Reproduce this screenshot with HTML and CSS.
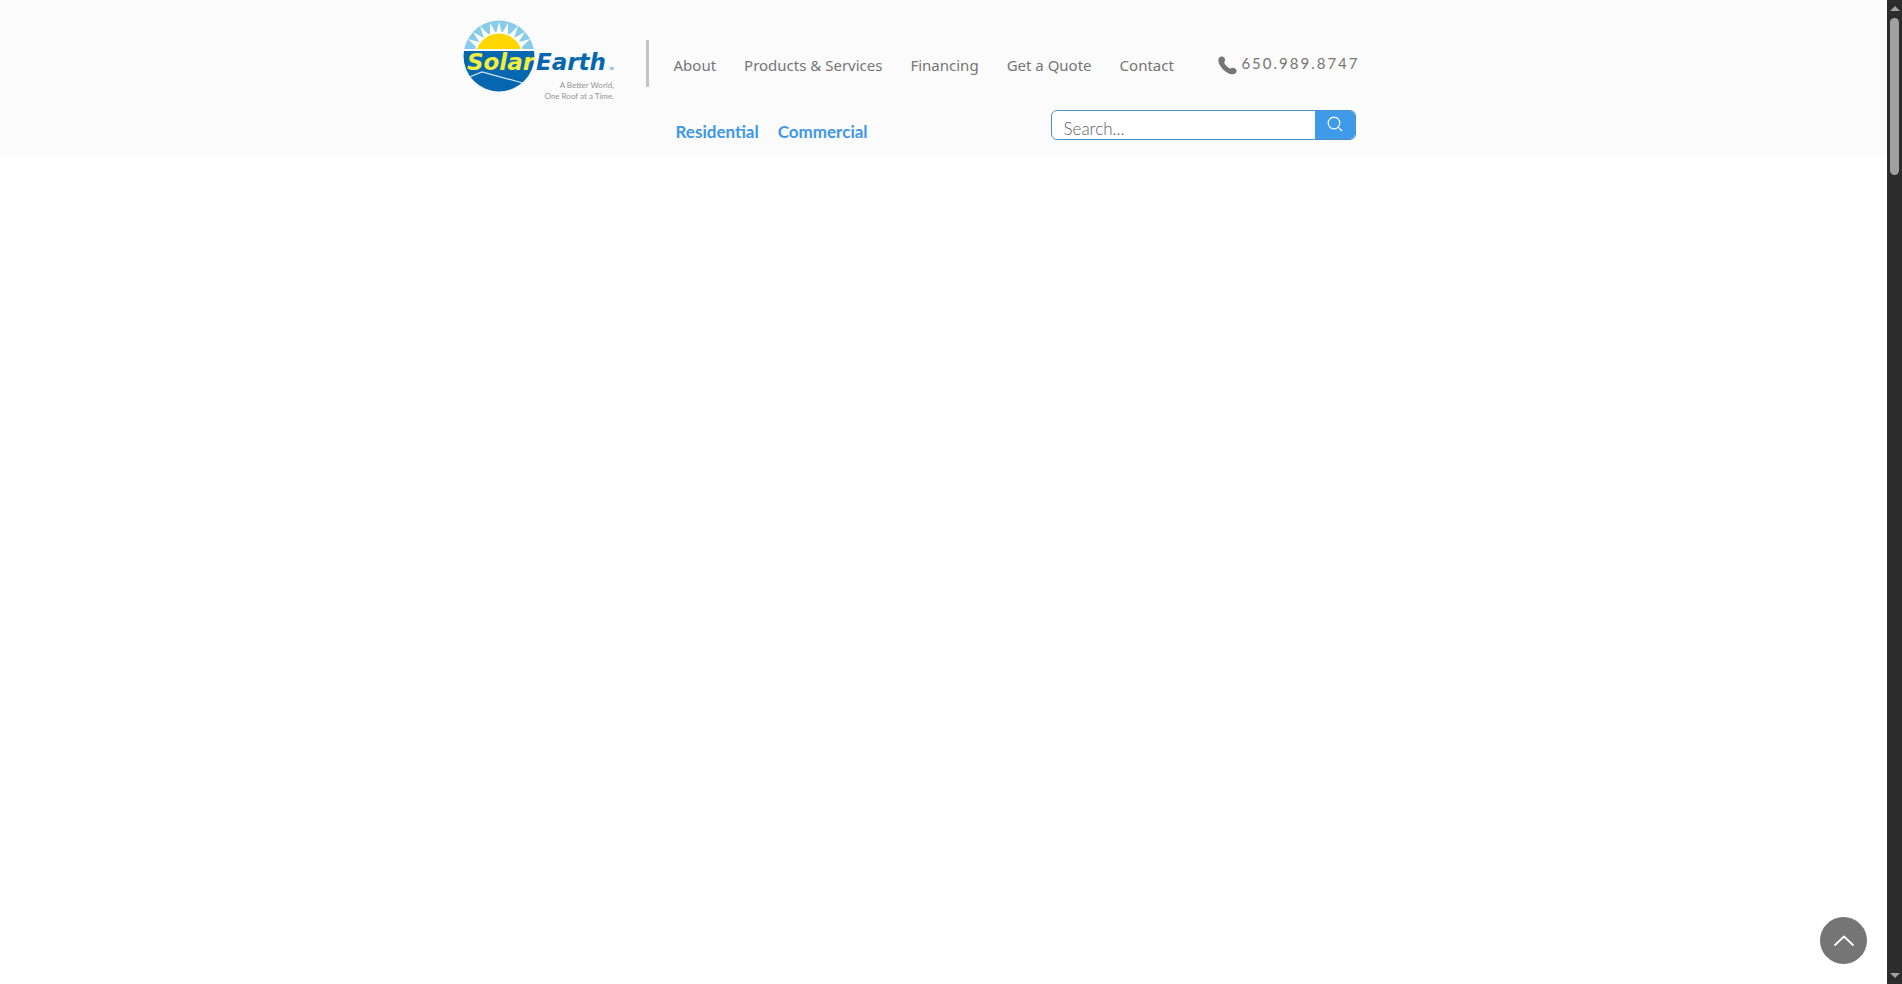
FILE: index.html
```html
<!DOCTYPE html>
<html lang="en">
<head>
<meta charset="utf-8">
<title>SolarEarth</title>
<link rel="stylesheet" href="styles.css">
</head>
<body>
<div class="page">
  <header class="header">
    <div class="header-inner">
      <a class="logo" href="#" aria-label="SolarEarth home">
        <svg class="logo-art" viewBox="0 0 154 84" width="154" height="84">
          <defs><clipPath id="disc"><circle cx="36" cy="36" r="35.5"/></clipPath></defs>
          <g clip-path="url(#disc)">
            <rect width="72" height="30" fill="#87cdea"/>
            <path fill="#fff" d="M5 19L16.700 22.300L13.700 27.500ZM10 12L20.800 18.100L16.600 22.500ZM17 6L26 15L21 18.200ZM27 3L32.800 13L27 14.600ZM36 2L38.800 13L33.200 13ZM45 3L39.200 13L45 14.600ZM55 6L46 15L51 18.200ZM62 12L51.200 18.100L55.400 22.500ZM67 19L55.300 22.300L58.300 27.500Z"/>
            <circle cx="36" cy="37" r="25" fill="#fff"/>
            <circle cx="36" cy="37" r="23.500" fill="#ffd600"/>
            <rect y="29" width="72" height="2" fill="#fff"/>
            <rect y="31" width="72" height="42" fill="#0467b0"/>
            <path d="M4 58L19 52L60 63" fill="none" stroke="#d5e7f3" stroke-width="1.200"/>
          </g>
          <text class="logo-solar" x="4" y="50">Solar</text>
          <text class="logo-earth" x="73" y="50">Earth</text>
          <text class="logo-tm" x="146" y="50">TM</text>
          <text class="logo-tag" x="151" y="68" text-anchor="end">A Better World,</text>
          <text class="logo-tag" x="151" y="79" text-anchor="end">One Roof at a Time.</text>
        </svg>
      </a>
      <div class="divider"></div>
      <div class="header-main">
        <div class="top-row">
          <nav class="nav" aria-label="Main">
            <a href="#">About</a>
            <a href="#">Products &amp; Services</a>
            <a href="#">Financing</a>
            <a href="#">Get a Quote</a>
            <a href="#">Contact</a>
          </nav>
          <a class="phone" href="tel:6509898747">
            <svg class="phone-icon" viewBox="0 0 19 19" width="19" height="19"><path fill="#757575" d="M1.200 1.500C3-.2 5.600.2 6.600 2.200C7.500 4 7.200 5.200 6.100 6.300C6.900 8.900 9.500 11.600 12.300 12.700C13.800 11.500 15.400 11.600 17 12.600C19 13.900 19.200 15.700 17.600 17.300C15.700 18.900 12.700 18.600 9.400 16.800C5.800 14.700 2.800 11.600 1.200 8C.1 5.300 0 3 1.200 1.500Z"/></svg>
            <span>650.989.8747</span>
          </a>
        </div>
        <div class="bottom-row">
          <nav class="segments" aria-label="Segments">
            <a href="#">Residential</a>
            <a href="#">Commercial</a>
          </nav>
          <form class="search" role="search">
            <input class="search-input" type="search" placeholder="Search..." aria-label="Search">
            <button class="search-button" type="button" aria-label="Search">
              <svg viewBox="0 0 16 16" width="16" height="16" fill="none" stroke="#fff" stroke-width="1.200"><circle cx="7" cy="7" r="5.800"/><path d="M11.200 11.200L15 15"/></svg>
            </button>
          </form>
        </div>
      </div>
    </div>
  </header>
  <main class="content"></main>
  <button class="to-top" type="button" aria-label="Back to top">
    <svg viewBox="0 0 22 12" width="22" height="12" fill="none" stroke="#fff" stroke-width="1.800"><path d="M1.500 10.500L11 1.500L20.500 10.500"/></svg>
  </button>
</div>
<div class="scrollbar" aria-hidden="true">
  <span class="arrow arrow-up"></span>
  <span class="thumb"></span>
  <span class="arrow arrow-down"></span>
</div>
</body>
</html>
```

FILE: styles.css
```css
* { box-sizing: border-box; }
body {
  margin: 0;
  min-height: 100vh;
  display: flex;
  background: #fff;
  font-family: "Noto Sans", sans-serif;
  color: #757575;
}
a { color: inherit; text-decoration: none; }
.page { flex: 1; min-width: 0; }
.header { background: #fbfbfb; }
.header-inner {
  max-width: 980px;
  margin: 0 auto;
  padding: 20px 78px 13px 9px;
  display: flex;
  align-items: flex-start;
}
.logo { flex: none; }
.logo-art { display: block; }
.logo-solar, .logo-earth {
  font-family: "DejaVu Sans", sans-serif;
  font-weight: bold;
  font-style: italic;
  font-size: 23px;
}
.logo-solar { fill: #f3ee3c; }
.logo-earth { fill: #0467b0; }
.logo-tm { font-size: 3px; fill: #0467b0; }
.logo-tag {
  font-family: Lato, sans-serif;
  font-size: 8px;
  fill: #959595;
}
.divider {
  flex: none;
  width: 3px;
  height: 47px;
  margin: 20px 25px 0 29px;
  background: #c4c4c4;
}
.header-main { flex: 1; min-width: 0; }
.top-row, .bottom-row {
  display: flex;
  justify-content: space-between;
}
.top-row { padding-top: 32px; height: 90px; }
.nav {
  display: flex;
  gap: 28px;
  font-size: 15px;
  line-height: 26px;
  white-space: nowrap;
}
.phone {
  display: flex;
  gap: 4px;
  margin-right: -4px;
  font-family: Lato, sans-serif;
  font-size: 15px;
  line-height: 22px;
  letter-spacing: 2px;
}
.phone-icon { margin-top: 4px; }
.segments {
  display: flex;
  gap: 19px;
  padding: 11px 0 0 2px;
  font-family: Lato, sans-serif;
  font-size: 17px;
  font-weight: bold;
  line-height: 21px;
  color: #4097e5;
}
.search {
  display: flex;
  width: 305px;
  height: 30px;
  border: 1px solid #4a90c9;
  border-radius: 6px;
  overflow: hidden;
  background: #fff;
}
.search-input {
  flex: 1;
  min-width: 0;
  border: 0;
  padding: 8px 12px 0;
  background: transparent;
  font-family: Lato, sans-serif;
  font-weight: 300;
  font-size: 17px;
  line-height: 20px;
  outline: 0;
}
.search-input::placeholder { color: #606060; }
.search-button {
  width: 40px;
  border: 0;
  padding: 0 0 2px;
  display: grid;
  place-items: center;
  background: #3f9bea;
}
.to-top {
  position: fixed;
  right: 35px;
  bottom: 20px;
  width: 47px;
  height: 47px;
  border: 0;
  border-radius: 50%;
  padding: 0;
  display: grid;
  place-items: center;
  background: #757575;
}
.scrollbar {
  width: 15px;
  flex: none;
  padding: 6px 0;
  display: flex;
  flex-direction: column;
  align-items: center;
  background: #2c2c2c;
}
.arrow {
  border: 5px solid transparent;
}
.arrow-up { border-top: 0; border-bottom-color: #a0a0a0; }
.arrow-down { margin-top: auto; border-bottom: 0; border-top-color: #a0a0a0; }
.thumb {
  width: 9px;
  height: 16vh;
  margin-top: 7px;
  border-radius: 5px;
  background: #a0a0a0;
}
```
